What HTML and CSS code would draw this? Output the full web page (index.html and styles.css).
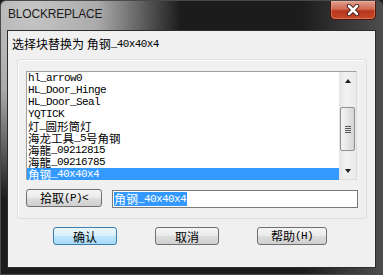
FILE: index.html
```html
<!DOCTYPE html>
<html lang="zh-CN">
<head>
  <meta charset="UTF-8">
  <title>BLOCKREPLACE</title>
  <link rel="stylesheet" href="styles.css">
</head>
<body>
  <div class="window">
    <div class="titlebar">
      <div class="title">BLOCKREPLACE</div>
      <div class="close">
        <svg width="16" height="12" viewBox="0 0 16 12">
          <path d="M4 2 L12 10 M12 2 L4 10" stroke="#3a1008" stroke-width="4.4" stroke-linecap="round"/>
          <path d="M4 2 L12 10 M12 2 L4 10" stroke="#ffffff" stroke-width="2.6" stroke-linecap="round"/>
        </svg>
      </div>
    </div>

    <div class="client">
      <div class="prompt"><span class="zh">选择块替换为 角钢</span><span>_40x40x4</span></div>

      <div class="group">
        <div class="list">
          <div class="rows">
            <div class="row">hl_arrow0</div>
            <div class="row">HL_Door_Hinge</div>
            <div class="row">HL_Door_Seal</div>
            <div class="row">YQTICK</div>
            <div class="row"><span class="zh">灯</span><span>_</span><span class="zh">圆形筒灯</span></div>
            <div class="row"><span class="zh">海龙工具</span><span>_5</span><span class="zh">号角钢</span></div>
            <div class="row"><span class="zh">海龍</span><span>_09212815</span></div>
            <div class="row"><span class="zh">海龍</span><span>_09216785</span></div>
            <div class="row selected"><span class="zh">角钢</span><span>_40x40x4</span></div>
          </div>
          <div class="scrollbar">
            <div class="arrow"><span class="tri-up"></span></div>
            <div class="track">
              <div class="thumb">
                <div class="grip"></div>
              </div>
            </div>
            <div class="arrow"><span class="tri-down"></span></div>
          </div>
        </div>

        <div class="pick-row">
          <button class="btn pick"><span class="zh">拾取</span><span>(P)&lt;</span></button>
          <div class="input"><span class="sel"><span class="zh">角钢</span><span>_40x40x4</span></span></div>
        </div>
      </div>

      <div class="buttons">
        <button class="btn default">确认</button>
        <button class="btn">取消</button>
        <button class="btn help"><span class="zh">帮助</span><span>(H)</span></button>
      </div>
    </div>
  </div>
</body>
</html>
```

FILE: styles.css
```css
* {
  box-sizing: border-box;
  margin: 0;
  padding: 0;
}

body {
  width: 383px;
  height: 275px;
  overflow: hidden;
  background-color: #1c1c1c;
  font-family: "Liberation Mono", "Noto Sans CJK SC", monospace;
  font-size: 11px;
  letter-spacing: -0.6px;
  color: #000;
}

.zh {
  font-family: "Noto Sans CJK SC", sans-serif;
  font-size: 12px;
  letter-spacing: 0;
}

.window {
  width: 383px;
  height: 275px;
  display: flex;
  flex-direction: column;
  padding: 0 6px 6px 6px;
  border: 1px solid #4a4a4a;
  border-radius: 6px 6px 0 0;
  background:
    linear-gradient(to right, rgba(0, 0, 0, 0) 300px, rgba(90, 90, 90, 0.8) 383px),
    radial-gradient(ellipse 150px 190px at 30px 10px, #c6c6c6 0, #aaaaaa 45%, rgba(28, 28, 28, 0) 100%),
    #1c1c1c;
}

/* barra de titulo */
.titlebar {
  height: 29px;
  flex-shrink: 0;
  display: flex;
  justify-content: space-between;
  align-items: flex-start;
  margin-right: 1px;
}

.title {
  font-family: "Liberation Sans", Arial, sans-serif;
  font-size: 12px;
  letter-spacing: -0.2px;
  line-height: 14px;
  color: #1a1a1a;
  padding: 6px 0 0 1px;
}

.close {
  width: 46px;
  height: 19px;
  margin-right: -1px;
  display: flex;
  align-items: center;
  justify-content: center;
  border: 1px solid #4a1508;
  border-top: none;
  border-radius: 0 0 5px 5px;
  background: linear-gradient(to bottom, #e0a090 0, #cf6a52 45%, #b8361c 55%, #c44a2a 100%);
  box-shadow: inset 0 0 0 1px rgba(255, 200, 180, 0.35);
}

/* area do dialogo */
.client {
  flex: 1;
  min-height: 0;
  border: 1px solid #2c2c2c;
  background-color: #f0f0f0;
}

.prompt {
  margin-top: 6px;
  padding-left: 4px;
  height: 14px;
  display: flex;
  align-items: center;
  white-space: pre;
}

.group {
  margin: 8px 8px 0 9px;
  padding: 11px 8px 10px 8px;
  border: 1px solid #d5dfe5;
  border-radius: 3px;
  box-shadow: inset 1px 1px 0 #ffffff;
}

.list {
  width: 331px;
  height: 109px;
  display: flex;
  background-color: white;
  border: 1px solid #dcdcdc;
  border-top-color: #a0a0a0;
  border-left-color: #a0a0a0;
}

.rows {
  flex: 1;
}

.row {
  height: 12px;
  padding-left: 1px;
  display: flex;
  align-items: center;
  white-space: pre;
}

.row span,
.prompt span,
.btn span,
.input span {
  line-height: 12px;
}

.row .zh {
  font-size: 11.5px;
}

.row.selected {
  background-color: #3399ff;
  color: white;
}

.scrollbar {
  width: 17px;
  display: flex;
  flex-direction: column;
  background: linear-gradient(to right, #e4e4e4, #f2f2f2 40%, #eaeaea);
}

.arrow {
  height: 17px;
  display: flex;
  align-items: center;
  justify-content: center;
}

.tri-up,
.tri-down {
  width: 0;
  height: 0;
  border-left: 3.5px solid transparent;
  border-right: 3.5px solid transparent;
}

.tri-up {
  border-bottom: 4px solid #1e1e1e;
}

.tri-down {
  border-top: 4px solid #1e1e1e;
}

.track {
  flex: 1;
  padding: 18px 1px 0 1px;
}

.thumb {
  height: 44px;
  border: 1px solid #8f8f8f;
  border-radius: 2px;
  background: linear-gradient(to right, #f3f3f3, #e6e6e6 50%, #d4d4d4);
  display: flex;
  align-items: center;
  justify-content: center;
}

.grip {
  width: 6px;
  height: 7px;
  background: repeating-linear-gradient(to bottom, #555 0, #555 1px, transparent 1px, transparent 2px);
}

.pick-row {
  margin-top: 9px;
  display: flex;
  gap: 10px;
}

.btn {
  height: 18px;
  width: 64px;
  display: flex;
  align-items: center;
  justify-content: center;
  border: 1px solid #707070;
  border-radius: 3px;
  background: linear-gradient(to bottom, #f4f4f4 0, #ebebeb 48%, #dddddd 52%, #cfcfcf 100%);
  font-family: "Noto Sans CJK SC", sans-serif;
  font-size: 12px;
  letter-spacing: 0;
  color: #000;
  white-space: pre;
}

.btn.pick,
.btn.help {
  font-family: "Liberation Mono", monospace;
  font-size: 11px;
  letter-spacing: -0.6px;
}

.btn.pick {
  width: 76px;
}

.btn.help {
  width: 70px;
}

.btn .zh {
  letter-spacing: 0;
}

.btn.default {
  border-color: #3c7fb1;
  background: linear-gradient(to bottom, #eaf6fd 0, #d9f0fc 48%, #bee6fd 52%, #a7d9f5 100%);
}

.input {
  flex: 1;
  height: 18px;
  margin-top: 1px;
  border: 1px solid #7a7a7a;
  background-color: white;
  padding-left: 1px;
  display: flex;
  align-items: center;
  white-space: pre;
}

.input .sel {
  height: 14px;
  display: flex;
  align-items: center;
  background-color: #3399ff;
  color: white;
  padding-right: 1px;
}

.buttons {
  margin-top: 8px;
  padding-left: 45px;
  display: flex;
  gap: 38px;
}
```
